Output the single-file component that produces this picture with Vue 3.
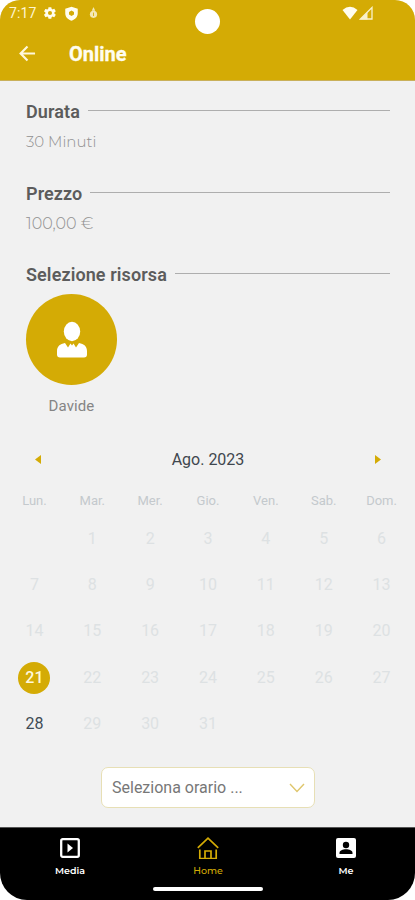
<template>
	<div class="phone">
		<header class="header">
			<!-- status bar -->
			<div class="status-bar">
				<span class="clock">7:17</span>
				<svg class="status-gear" viewBox="0 0 24 24">
					<path fill-rule="evenodd" d="M19.4 13l.1-1-.1-1 2.2-1.7c.2-.2.2-.4.1-.6l-2.1-3.6c-.1-.2-.4-.3-.6-.2l-2.6 1c-.5-.4-1.1-.7-1.7-1L14.3 2.4c0-.2-.2-.4-.5-.4h-4c-.3 0-.5.2-.5.4L8.9 5c-.6.3-1.2.6-1.7 1l-2.6-1c-.2-.1-.5 0-.6.2L1.9 8.8c-.1.2-.1.4.1.6L4.2 11l-.1 1 .1 1L2 14.7c-.2.2-.2.4-.1.6L4 18.9c.1.2.4.3.6.2l2.6-1c.5.4 1.1.7 1.7 1l.4 2.5c0 .2.2.4.5.4h4c.3 0 .5-.2.5-.4l.4-2.5c.6-.3 1.2-.6 1.7-1l2.6 1c.2.1.5 0 .6-.2l2.1-3.6c.1-.2.1-.4-.1-.6zM12 15.500a3.500 3.500 0 1 1 0-7 3.500 3.500 0 0 1 0 7z" />
				</svg>
				<svg class="status-shield" viewBox="0 0 24 24">
					<path fill-rule="evenodd" d="M12 1L2 4.500v7c0 6 4.200 10 10 12 5.800-2 10-6 10-12v-7zM12 7l4 2.500v4L12 16l-4-2.500v-4z" />
				</svg>
				<svg class="status-debug" viewBox="0 0 10 14">
					<path d="M5 0l2 4.500H3z" />
					<circle cx="5" cy="8.500" r="4.200" />
					<path class="debug-mark" d="M5 6.500v4" />
				</svg>
				<span class="camera"></span>
				<svg class="status-wifi" viewBox="0 0 16 14">
					<path d="M.5 4Q8-2.500 15.500 4L8 13.500z" />
				</svg>
				<svg class="status-signal" viewBox="0 0 14 14">
					<path class="signal-frame" d="M1.500 13H13V1.500z" />
					<path d="M1 13.500L8.500 6v7.500z" />
				</svg>
			</div>
			<div class="title-bar">
				<svg class="back" viewBox="0 0 18 18">
					<path d="M17 9H2M9 1.700L1.700 9 9 16.300" />
				</svg>
				<h1>Online</h1>
			</div>
		</header>

		<main class="content">
			<section v-for="item in details" :key="item.title" class="detail">
				<h2>{{ item.title }}</h2>
				<p>{{ item.value }}</p>
			</section>

			<section class="resource">
				<h2>Selezione risorsa</h2>
				<div class="person">
					<div class="avatar">
						<svg viewBox="0 0 30 37">
							<ellipse cx="15" cy="10.500" rx="8.200" ry="9.700" />
							<path d="M8 22l3 4.500 2.500-4 1.500 2 1.500-2 2.500 4 3-4.500c5 .8 8 3.500 8 8V33.500q0 3-3 3H3q-3 0-3-3V30c0-4.500 3-7.200 8-8z" />
						</svg>
					</div>
					<span>Davide</span>
				</div>
			</section>

			<!-- calendar -->
			<section class="calendar">
				<div class="month">
					<svg viewBox="0 0 6 9"><path d="M6 0v9L0 4.500z" /></svg>
					<span>Ago. 2023</span>
					<svg viewBox="0 0 6 9"><path d="M0 0v9l6-4.500z" /></svg>
				</div>
				<div class="weekdays">
					<span v-for="name in weekdays" :key="name">{{ name }}</span>
				</div>
				<div class="days">
					<span class="day"></span>
					<button
						v-for="day in 31"
						:key="day"
						class="day"
						:class="{ available: available.includes(day), selected: day === selectedDay }"
						@click="selectDay(day)"
					>
						<span>{{ day }}</span>
					</button>
				</div>
			</section>

			<button class="time-select">
				<span>Seleziona orario ...</span>
				<svg viewBox="0 0 16 10"><path d="M1 1l7 7.500L15 1" /></svg>
			</button>
		</main>

		<footer class="footer">
			<nav>
				<a class="tab">
					<svg viewBox="0 0 22 22">
						<rect class="line thick" x="2.200" y="2.200" width="17.600" height="17.600" rx="1.500" />
						<path class="fill" d="M8.500 6.500v9l5.500-4.500z" />
					</svg>
					<span>Media</span>
				</a>
				<a class="tab active">
					<svg viewBox="0 0 22 22">
						<path class="line home" d="M.8 10.800L11 1.200l10.200 9.600M2.800 12.500v9H19.200v-9M8 21.500V14h6v7.500" />
					</svg>
					<span>Home</span>
				</a>
				<a class="tab">
					<svg viewBox="0 0 22 22">
						<rect class="fill" x="1" y="1" width="20" height="20" rx="2" />
						<circle class="cutout" cx="11" cy="8" r="3.200" />
						<path class="cutout" d="M4.500 17v-1c0-5 13-5 13 0v1z" />
					</svg>
					<span>Me</span>
				</a>
			</nav>
			<div class="home-indicator"></div>
		</footer>
	</div>
</template>

<script setup>
import { ref } from 'vue'

const details = [
	{ title: 'Durata', value: '30 Minuti' },
	{ title: 'Prezzo', value: '100,00 €' },
]

const weekdays = ['Lun.', 'Mar.', 'Mer.', 'Gio.', 'Ven.', 'Sab.', 'Dom.']

// bookable days of the month
const available = [21, 28]
const selectedDay = ref(21)

const selectDay = (day) => {
	if (available.includes(day)) {
		selectedDay.value = day
	}
}
</script>

<style>
body {
	margin: 0;
	background: #fff;
}
</style>

<style scoped>
* {
	box-sizing: border-box;
}

button {
	padding: 0;
	border: 0;
	background: none;
	font: inherit;
}

.phone {
	display: flex;
	flex-direction: column;
	width: 415px;
	height: 900px;
	overflow: hidden;
	border-radius: 20px 20px 27px 27px;
	background: #f1f1f1;
	font-family: Roboto, sans-serif;
}

.header {
	height: 81px;
	flex: none;
	background: #d4ab05;
	border-bottom: 1px solid #c9b05a;
}

.status-bar {
	position: relative;
	display: flex;
	align-items: center;
	height: 26px;
	padding-left: 9px;
	fill: #fffdf0;
}

.clock {
	width: 34px;
	color: #fff5d0;
	font-size: 14px;
	letter-spacing: 0.1px;
}

.status-gear {
	width: 14px;
	height: 14px;
}

.status-shield {
	width: 15px;
	height: 15px;
	margin-left: 7px;
}

.status-debug {
	width: 9px;
	height: 12px;
	margin-left: 10px;
	opacity: 0.75;
}

.debug-mark {
	fill: none;
	stroke: #d4ab05;
}

/* front camera, over the bar */
.camera {
	position: absolute;
	top: 9px;
	left: 195px;
	width: 25px;
	height: 25px;
	border-radius: 50%;
	background: #fff;
}

.status-wifi {
	width: 16px;
	height: 14px;
	margin-left: auto;
}

.status-signal {
	width: 14px;
	height: 14px;
	margin: 0 42px 0 1px;
	opacity: 0.85;
}

.signal-frame {
	fill: none;
	stroke: #fffdf0;
	stroke-width: 1.3;
}

.title-bar {
	display: flex;
	align-items: center;
	height: 55px;
	padding-left: 19px;
}

.back {
	width: 17px;
	height: 17px;
	fill: none;
	stroke: #fff8dc;
	stroke-width: 2.3;
}

.title-bar h1 {
	margin: 0 0 0 33px;
	color: #fffdf0;
	font-size: 20px;
	line-height: 24px;
	font-weight: 700;
	-webkit-text-stroke: 0.3px #fffdf0;
}

.content {
	display: flex;
	flex-direction: column;
	height: 746px;
	padding-top: 20px;
}

.detail {
	height: 81.5px;
	padding: 0 25px 0 26px;
}

h2 {
	display: flex;
	align-items: center;
	gap: 8px;
	height: 22px;
	margin: 0;
	color: #5c5c5c;
	font-size: 18px;
	line-height: 22px;
	font-weight: 600;
	letter-spacing: 0.1px;
}

h2::after {
	content: '';
	flex: 1;
	height: 1px;
	margin-bottom: 3px;
	background: #aeaeae;
}

.detail p {
	margin: 9px 0 0;
	color: #909090;
	font-family: Montserrat, Inter, sans-serif;
	font-size: 15px;
	font-weight: 300;
	line-height: 20px;
}

.detail:nth-child(2) p {
	font-size: 16px;
}

.resource {
	height: 166.5px;
	padding: 0 25px 0 26px;
}

.person {
	display: flex;
	flex-direction: column;
	align-items: center;
	width: 91px;
	margin-top: 7.5px;
}

.avatar {
	display: flex;
	justify-content: center;
	width: 91px;
	height: 91px;
	padding-top: 27px;
	border-radius: 50%;
	background: #d4ab05;
}

.avatar svg {
	width: 30px;
	height: 37px;
	fill: #fff;
}

.person span {
	margin-top: 11px;
	color: #858585;
	font-size: 15px;
	line-height: 20px;
	letter-spacing: 0.1px;
}

.calendar {
	padding: 0 4.5px 0 5.5px;
}

.month {
	display: flex;
	align-items: center;
	justify-content: space-between;
	height: 58px;
	padding: 0 29px;
	color: #3f474e;
	font-size: 16px;
}

.month svg {
	width: 6px;
	height: 9px;
	margin-bottom: 1px;
	fill: #d4ab05;
}

.weekdays,
.days {
	display: grid;
	grid-template-columns: repeat(7, 1fr);
	text-align: center;
}

.weekdays {
	height: 27px;
	color: #c4c9cd;
	font-size: 13px;
	line-height: 23px;
}

.days {
	grid-auto-rows: 46.4px;
}

.day {
	display: flex;
	align-items: center;
	justify-content: center;
	color: #dde1e3;
	font-size: 16px;
}

.day span {
	width: 32px;
	height: 32px;
	border-radius: 50%;
	line-height: 32px;
}

.available {
	color: #3f4c55;
}

.selected {
	color: #fff8dc;
	font-weight: 500;
}

.selected span {
	background: #d4ab05;
}

.time-select {
	display: flex;
	align-items: center;
	justify-content: space-between;
	width: 214px;
	height: 41px;
	margin: 19.5px 0 0 101px;
	padding: 1px 9px 0 10px;
	border: 1px solid #e7dfb5;
	border-radius: 7px;
	background: #fff;
	color: #777;
	font-size: 16px;
}

.time-select svg {
	width: 16px;
	height: 10px;
	fill: none;
	stroke: #dfc66d;
	stroke-width: 1.4;
}

.footer {
	height: 73px;
	flex: none;
	border-top: 1px solid #555;
	background: #000;
}

nav {
	display: grid;
	grid-template-columns: repeat(3, 1fr);
	height: 58px;
	padding: 9px 0 0 1px;
}

.tab {
	display: flex;
	flex-direction: column;
	align-items: center;
	color: #fff;
	font-family: Montserrat, Inter, sans-serif;
	font-size: 9.5px;
	font-weight: 600;
	line-height: 12px;
}

.tab svg {
	width: 22px;
	height: 22px;
	margin-bottom: 6px;
}

.active {
	color: #d4ab05;
	font-weight: 500;
}

.line {
	fill: none;
	stroke: currentColor;
}

.home {
	stroke-width: 1.7;
}

.thick {
	stroke-width: 2.3;
}

.fill {
	fill: currentColor;
}

.cutout {
	fill: #000;
}

.home-indicator {
	width: 110px;
	height: 4px;
	margin: 1px auto 0;
	border-radius: 2px;
	background: #fff;
}
</style>
